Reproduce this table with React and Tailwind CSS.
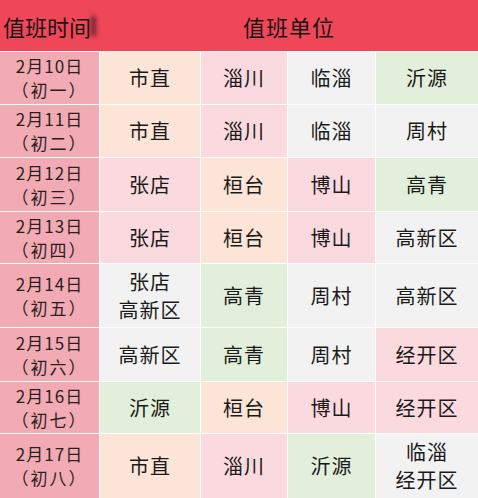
import React from "react";

const P = "bg-[#fce4d6]"; // peach
const K = "bg-[#fad9df]"; // pink
const G = "bg-[#f2f2f2]"; // gray
const N = "bg-[#e2efda]"; // green

const rows = [
  { d: "2月10日", l: "（初一）", h: "h-[52px]", c: [[P, ["市直"]], [K, ["淄川"]], [G, ["临淄"]], [N, ["沂源"]]] },
  { d: "2月11日", l: "（初二）", h: "h-[52px]", c: [[P, ["市直"]], [K, ["淄川"]], [G, ["临淄"]], [G, ["周村"]]] },
  { d: "2月12日", l: "（初三）", h: "h-[53px]", c: [[K, ["张店"]], [P, ["桓台"]], [K, ["博山"]], [N, ["高青"]]] },
  { d: "2月13日", l: "（初四）", h: "h-[51px]", c: [[K, ["张店"]], [P, ["桓台"]], [K, ["博山"]], [G, ["高新区"]]] },
  { d: "2月14日", l: "（初五）", h: "h-[63px]", c: [[G, ["张店", "高新区"]], [N, ["高青"]], [G, ["周村"]], [G, ["高新区"]]] },
  { d: "2月15日", l: "（初六）", h: "h-[53px]", c: [[G, ["高新区"]], [N, ["高青"]], [G, ["周村"]], [K, ["经开区"]]] },
  { d: "2月16日", l: "（初七）", h: "h-[51px]", c: [[N, ["沂源"]], [P, ["桓台"]], [K, ["博山"]], [K, ["经开区"]]] },
  { d: "2月17日", l: "（初八）", h: "h-[64px]", c: [[P, ["市直"]], [K, ["淄川"]], [N, ["沂源"]], [G, ["临淄", "经开区"]]] },
];

const font = { fontFamily: '"Noto Sans CJK SC", "Noto Sans", sans-serif' };

export default function App() {
  return (
    <div className="w-[478px] h-[498px] bg-white overflow-hidden text-[#1a1a1a]" style={font}>
      <div className="h-[51px] bg-[#ef4658] flex items-center">
        <div className="w-[100px] flex items-center pl-[3px] text-[22px] leading-none text-[#1a1414]">
          <span>值班时间</span>
          <span className="inline-block w-[5px] h-[20px] bg-[#3a1a1c] blur-[2px] opacity-70"></span>
        </div>
        <div className="flex-1 text-center text-[22px] leading-none tracking-[1px] text-[#1a1414]">值班单位</div>
      </div>
      <div className="mt-px grid grid-cols-[99px_100px_86px_87px_1fr] gap-px">
        {rows.map((r, i) => (
          <React.Fragment key={i}>
            <div className={`${r.h} bg-[#f2aab4] flex flex-col items-center justify-center text-[17px] leading-[24px] text-[#2a1f20]`}>
              <div className="tracking-[1px]">{r.d}</div>
              <div className="tracking-[2px]">{r.l}</div>
            </div>
            {r.c.map(([bg, lines], j) => (
              <div key={j} className={`${r.h} ${bg} flex flex-col items-center justify-center text-[20px] leading-[28px] tracking-[1px]`}>
                {lines.map((t, k) => (
                  <div key={k}>{t}</div>
                ))}
              </div>
            ))}
          </React.Fragment>
        ))}
      </div>
    </div>
  );
}
